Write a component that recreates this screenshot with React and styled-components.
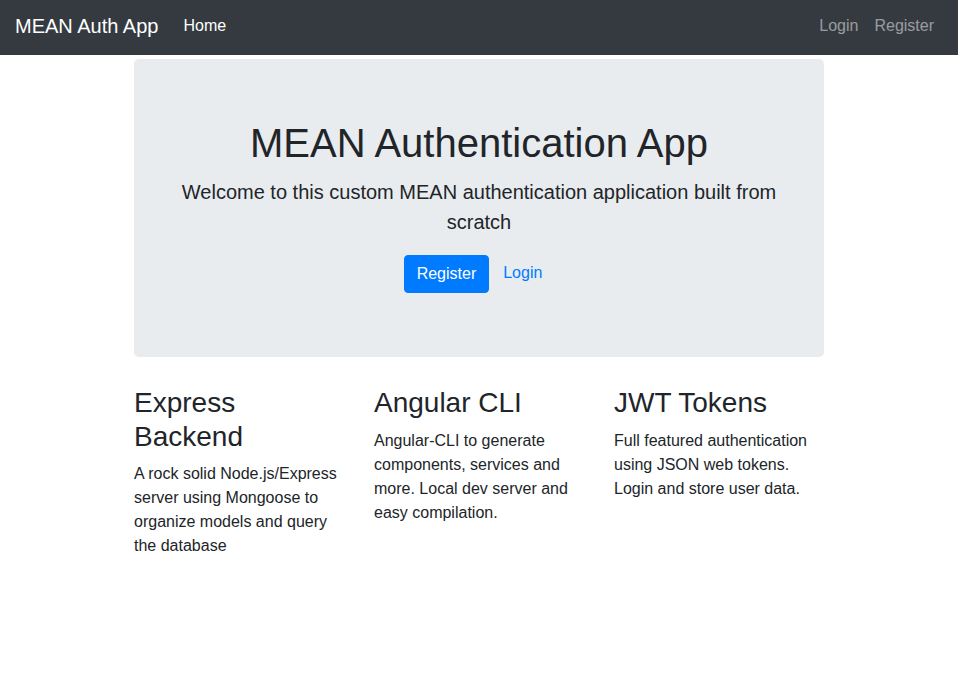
import { createGlobalStyle, styled } from "styled-components";

const GlobalStyle = createGlobalStyle`
    * {
        box-sizing: border-box;
    }
    body {
        margin: 0;
        font-family: "Liberation Sans", Arial, sans-serif;
        font-size: 16px;
        line-height: 1.5;
        color: #212529;
        background: #fff;
    }
`;

const features = [
    {
        title: "Express Backend",
        text: "A rock solid Node.js/Express server using Mongoose to organize models and query the database",
    },
    {
        title: "Angular CLI",
        text: "Angular-CLI to generate components, services and more. Local dev server and easy compilation.",
    },
    {
        title: "JWT Tokens",
        text: "Full featured authentication using JSON web tokens. Login and store user data.",
    },
];

export default function App() {
    return (
        <>
            <GlobalStyle />
            <Navbar>
                <Brand href="#">MEAN Auth App</Brand>
                <NavList>
                    <NavLink $active href="#">
                        Home
                    </NavLink>
                </NavList>
                <NavList $right>
                    <NavLink href="#">Login</NavLink>
                    <NavLink href="#">Register</NavLink>
                </NavList>
            </Navbar>
            <Container>
                <Jumbotron>
                    <Title>MEAN Authentication App</Title>
                    <Lead>
                        Welcome to this custom MEAN authentication application
                        built from scratch
                    </Lead>
                    <Actions>
                        <PrimaryButton href="#">Register</PrimaryButton>
                        <LinkButton href="#">Login</LinkButton>
                    </Actions>
                </Jumbotron>
                <Row>
                    {features.map((f) => (
                        <Col key={f.title}>
                            <Heading>{f.title}</Heading>
                            <Text>{f.text}</Text>
                        </Col>
                    ))}
                </Row>
            </Container>
        </>
    );
}

const Navbar = styled.nav`
    display: flex;
    align-items: center;
    height: 55px;
    padding: 0 16px 4px 15px;
    background: #343a40;
    margin-bottom: 4px;
`;

const Brand = styled.a`
    font-size: 20px;
    line-height: 30px;
    color: #fff;
    text-decoration: none;
    margin-right: 17px;
`;

const NavList = styled.div`
    display: flex;
    margin-left: ${(p) => (p.$right ? "auto" : "0")};
`;

const NavLink = styled.a`
    padding: 8px;
    color: ${(p) => (p.$active ? "#fff" : "rgba(255, 255, 255, 0.5)")};
    text-decoration: none;
`;

const Container = styled.div`
    width: 690px;
    margin: 0 auto;
`;

const Jumbotron = styled.div`
    background: #e9ecef;
    border-radius: 4.8px;
    padding: 60px 32px 64px;
    margin-bottom: 29px;
    text-align: center;
`;

const Title = styled.h1`
    margin: 0 0 10px;
    font-size: 40px;
    font-weight: 400;
    line-height: 1.2;
`;

const Lead = styled.p`
    margin: 0 0 18px;
    font-size: 20px;
    font-weight: 300;
    line-height: 30px;
`;

const Actions = styled.div`
    display: flex;
    justify-content: center;
    gap: 2px;
`;

const PrimaryButton = styled.a`
    display: inline-block;
    padding: 6px 12px;
    border: 1px solid #007bff;
    border-radius: 4px;
    background: #007bff;
    color: #fff;
    line-height: 24px;
    text-decoration: none;
`;

const LinkButton = styled.a`
    display: inline-block;
    padding: 6px 12px;
    color: #007bff;
    line-height: 24px;
    text-decoration: none;
`;

const Row = styled.div`
    display: grid;
    grid-template-columns: repeat(3, 1fr);
    margin: 0 -15px;
`;

const Col = styled.div`
    padding: 0 15px;
`;

const Heading = styled.h3`
    margin: 0 0 9px;
    font-size: 28px;
    font-weight: 400;
    line-height: 1.2;
`;

const Text = styled.p`
    margin: 0 0 16px;
`;
